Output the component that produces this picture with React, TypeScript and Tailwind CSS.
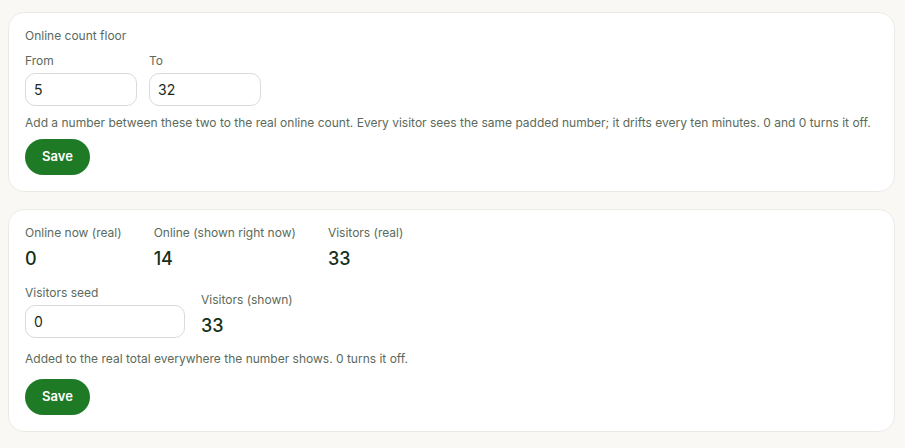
import React from "react";

function Field({ label, value, width }: { label: string; value: string; width: string }) {
  return (
    <div className="flex flex-col">
      <label className="text-xs text-[#5b6a5b] mb-1">{label}</label>
      <input
        defaultValue={value}
        className={`${width} h-[33px] rounded-[10px] border border-[#d9dcd6] bg-white px-2 text-sm text-[#1b2a1b] outline-none`}
      />
    </div>
  );
}

function Stat({ label, value }: { label: string; value: string }) {
  return (
    <div className="flex flex-col">
      <div className="text-xs text-[#5b6a5b]">{label}</div>
      <div className="mt-[6px] text-lg font-medium leading-6 text-[#15301b]">{value}</div>
    </div>
  );
}

function SaveButton() {
  return (
    <button className="h-9 w-[65px] rounded-full bg-[#1f7a25] text-[13px] font-semibold text-white">
      Save
    </button>
  );
}

export default function App() {
  return (
    <div
      className="min-h-[448px] bg-[#f9f8f5] pl-2 pr-[10px] pt-3 pb-4 flex flex-col gap-[17px]"
      style={{ fontFamily: "Inter, 'Noto Sans', sans-serif" }}
    >
      <section className="rounded-2xl border border-[#ebebe6] bg-white px-4 pt-[15px] pb-4">
        <div className="text-xs text-[#5b6a5b] mb-[9px]">Online count floor</div>
        <div className="flex gap-3">
          <Field label="From" value="5" width="w-28" />
          <Field label="To" value="32" width="w-28" />
        </div>
        <p className="mt-[9px] text-xs text-[#5b6a5b]">
          Add a number between these two to the real online count. Every visitor sees the same padded number; it drifts every ten minutes. 0 and 0 turns it off.
        </p>
        <div className="mt-2">
          <SaveButton />
        </div>
      </section>

      <section className="rounded-2xl border border-[#ebebe6] bg-white px-4 pt-[15px] pb-4">
        <div className="flex gap-8">
          <Stat label="Online now (real)" value="0" />
          <Stat label="Online (shown right now)" value="14" />
          <Stat label="Visitors (real)" value="33" />
        </div>
        <div className="mt-[14px] flex items-end gap-4">
          <Field label="Visitors seed" value="0" width="w-40" />
          <Stat label="Visitors (shown)" value="33" />
        </div>
        <p className="mt-[13px] text-xs text-[#5b6a5b]">
          Added to the real total everywhere the number shows. 0 turns it off.
        </p>
        <div className="mt-3">
          <SaveButton />
        </div>
      </section>
    </div>
  );
}
